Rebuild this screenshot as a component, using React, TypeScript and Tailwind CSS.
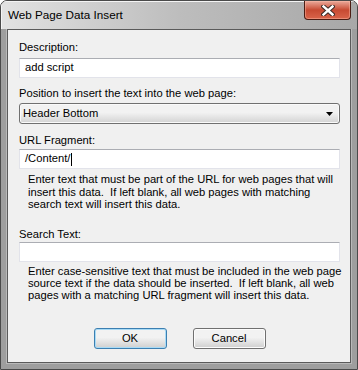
import React from "react";

const FONT = "font-['Liberation_Sans',Arial,sans-serif]";

function TextBox({ value, caret }: { value?: string; caret?: boolean }) {
  return (
    <div className="flex h-[20px] items-center border border-[#e2e3ea] border-t-[#abadb3] bg-white pl-[5px] leading-none">
      {value}
      {caret && <span className="ml-px inline-block h-[13px] w-px bg-black" />}
    </div>
  );
}

function Button({ label, focused }: { label: string; focused?: boolean }) {
  return (
    <button
      className={
        "flex h-[21px] w-[73px] items-center justify-center rounded-[3px] border bg-gradient-to-b from-[#f2f2f2] from-45% to-[#cfcfcf] leading-none text-black " +
        (focused
          ? "border-[#3c7fb1] shadow-[inset_0_0_0_1px_#a9dbf6]"
          : "border-[#707070] shadow-[inset_0_0_0_1px_#fcfcfc]")
      }
    >
      {label}
    </button>
  );
}

export default function App() {
  return (
    <div className={`h-[370px] w-[358px] bg-white ${FONT}`}>
      <div className="flex h-[370px] w-[358px] flex-col overflow-hidden rounded-t-[7px] border border-[#4a4a4a] bg-[#9e9e9e]">
        {/* title bar */}
        <div className="relative flex h-[28px] shrink-0 items-center bg-gradient-to-r from-[#e2e2e2] via-[#bdbdbd] to-[#a8a8a8] pl-[7px] shadow-[inset_1px_1px_0_#f4f4f4]">
          <span className="text-[11.7px] text-black">Web Page Data Insert</span>
          <div className="absolute right-[6px] top-0 flex h-[19px] w-[47px] items-center justify-center rounded-b-[4px] border border-t-0 border-[#4b1d14] bg-gradient-to-b from-[#e9a99b] via-[#c74a32] to-[#d9644a] shadow-[inset_0_0_0_1px_rgba(255,190,170,0.45)]">
            <svg width="14" height="11" viewBox="0 0 14 11">
              <path d="M2.5 1.5 L11.5 9.5 M11.5 1.5 L2.5 9.5" stroke="#3a2a26" strokeWidth="4.4" strokeLinecap="square" />
              <path d="M2.5 1.5 L11.5 9.5 M11.5 1.5 L2.5 9.5" stroke="#ffffff" strokeWidth="2.4" strokeLinecap="square" />
            </svg>
          </div>
        </div>

        {/* client area */}
        <div className="mx-[6px] mb-[6px] flex flex-1 flex-col border border-[#5a5a5a] bg-[#f0f0f0] pl-[11px] pr-[10px] pt-[10px] text-[11.2px] text-black shadow-[0_0_0_1px_#b9b9b9]">
          <div className="leading-[15px]">Description:</div>
          <div className="mt-[3px]">
            <TextBox value="add script" />
          </div>

          <div className="mt-[8px] leading-[15px]">Position to insert the text into the web page:</div>
          <div className="mt-[2px] flex h-[21px] items-center justify-between rounded-[3px] border border-[#707070] bg-gradient-to-b from-[#f2f2f2] from-45% to-[#d3d3d3] pl-[3px] pr-[6px] shadow-[inset_0_0_0_1px_#fafafa]">
            <span className="leading-none">Header Bottom</span>
            <svg width="7" height="4" viewBox="0 0 7 4">
              <path d="M0 0 H7 L3.5 4 Z" fill="#000" />
            </svg>
          </div>

          <div className="mt-[9px] leading-[15px]">URL Fragment:</div>
          <div className="mt-[1px]">
            <TextBox value="/Content/" caret />
          </div>
          <p className="mt-[4px] whitespace-nowrap pl-[9px] leading-[12.5px]">
            Enter text that must be part of the URL for web pages that will
            <br />
            insert this data.&nbsp; If left blank, all web pages with matching
            <br />
            search text will insert this data.
          </p>

          <div className="mt-[16px] leading-[15px]">Search Text:</div>
          <TextBox />
          <p className="mt-[3px] whitespace-nowrap pl-[9px] leading-[12px]">
            Enter case-sensitive text that must be included in the web page
            <br />
            source text if the data should be inserted.&nbsp; If left blank, all web
            <br />
            pages with a matching URL fragment will insert this data.
          </p>

          <div className="mb-[13px] mt-auto flex justify-center gap-[26px]">
            <Button label="OK" focused />
            <Button label="Cancel" />
          </div>
        </div>
      </div>
    </div>
  );
}
